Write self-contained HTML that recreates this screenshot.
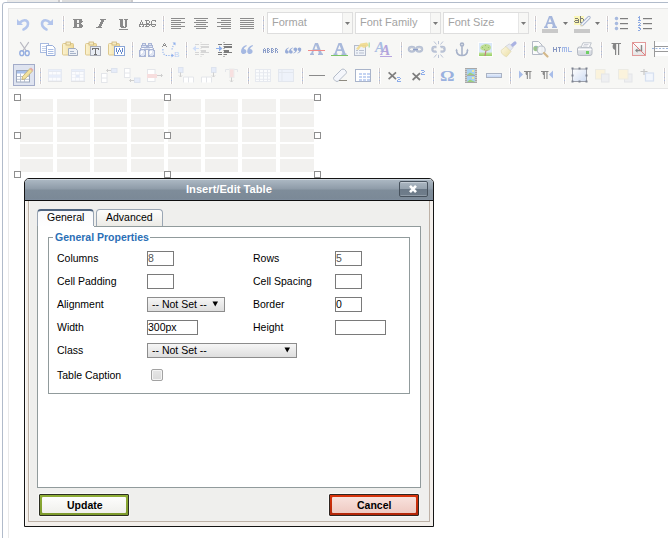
<!DOCTYPE html>
<html><head><meta charset="utf-8"><style>
*{margin:0;padding:0}
body{width:668px;height:538px;overflow:hidden;background:#fff;position:relative;font-family:'Liberation Sans', sans-serif}
.a{position:absolute}
.lbl{position:absolute;font:10.5px 'Liberation Sans', sans-serif;color:#000;white-space:nowrap}
.inp{position:absolute;box-sizing:border-box;border:1px solid #7a7a7a;background:#fff;height:15px;font:10.5px 'Liberation Sans', sans-serif;color:#555;padding-left:0;line-height:13px}
.sel{position:absolute;box-sizing:border-box;border:1px solid #8c8c8c;height:15px;background:linear-gradient(#f6f6f6,#dedede);font:10.5px 'Liberation Sans', sans-serif;color:#000;line-height:13px;padding-left:4px;white-space:nowrap}
</style></head><body>
<!-- top band -->
<div class="a" style="left:7px;top:0;width:51px;height:2px;background:#ebebeb"></div>
<div class="a" style="left:58px;top:0;width:2px;height:2px;background:#cdcbcb"></div>
<div class="a" style="left:60px;top:0;width:2px;height:2px;background:#fbfbfb"></div>
<div class="a" style="left:62px;top:0;width:69px;height:2px;background:#dcdcdc"></div>
<div class="a" style="left:131px;top:0;width:2px;height:2px;background:#cdcbcb"></div>
<!-- editor border -->
<div class="a" style="left:2px;top:2px;width:700px;height:600px;box-sizing:border-box;border:1px solid #b1bbca;border-radius:3px"></div>
<div class="a" style="left:8px;top:88px;width:1px;height:460px;background:#e9e9e9"></div>
<!-- toolbar -->
<div class="a" style="left:8px;top:8px;width:700px;height:81px;box-sizing:border-box;border:1px solid #e6e6e6;background:#f7f7f5"></div>
<div style="position:absolute;left:267px;top:12px;width:86px;height:22px;box-sizing:border-box;border:1px solid #dedede;background:#fff"><div style="position:absolute;left:4px;top:3px;font:11px 'Liberation Sans', sans-serif;color:#a3a3a3;white-space:nowrap">Format</div><div style="position:absolute;right:0;top:0;width:9px;height:20px;background:#f7f7f5;border-left:1px solid #e6e6e6"></div><svg style="position:absolute;left:77px;top:9px" width="6" height="4"><path d="M0 0 H5 L2.5 3 Z" fill="#7a7a7a"/></svg></div><div style="position:absolute;left:355px;top:12px;width:86px;height:22px;box-sizing:border-box;border:1px solid #dedede;background:#fff"><div style="position:absolute;left:4px;top:3px;font:11px 'Liberation Sans', sans-serif;color:#a3a3a3;white-space:nowrap">Font Family</div><div style="position:absolute;right:0;top:0;width:9px;height:20px;background:#f7f7f5;border-left:1px solid #e6e6e6"></div><svg style="position:absolute;left:77px;top:9px" width="6" height="4"><path d="M0 0 H5 L2.5 3 Z" fill="#7a7a7a"/></svg></div><div style="position:absolute;left:443px;top:12px;width:86px;height:22px;box-sizing:border-box;border:1px solid #dedede;background:#fff"><div style="position:absolute;left:4px;top:3px;font:11px 'Liberation Sans', sans-serif;color:#a3a3a3;white-space:nowrap">Font Size</div><div style="position:absolute;right:0;top:0;width:9px;height:20px;background:#f7f7f5;border-left:1px solid #e6e6e6"></div><svg style="position:absolute;left:77px;top:9px" width="6" height="4"><path d="M0 0 H5 L2.5 3 Z" fill="#7a7a7a"/></svg></div>
<!-- table button active -->
<div class="a" style="left:13px;top:64px;width:22px;height:22px;box-sizing:border-box;border:1px solid #a3acc9;background:#dfe4f0"></div>
<svg class="a" style="left:0;top:0" width="668" height="90" viewBox="0 0 668 90"><defs><linearGradient id="gwhite" x1="0" y1="0" x2="0" y2="1"><stop offset="0" stop-color="#fff"/><stop offset="1" stop-color="#e4e4e4"/></linearGradient><linearGradient id="gprint" x1="0" y1="0" x2="0" y2="1"><stop offset="0" stop-color="#e8eaee"/><stop offset="1" stop-color="#d2d6dd"/></linearGradient><linearGradient id="gclip" x1="0" y1="0" x2="1" y2="0"><stop offset="0" stop-color="#fbf3d2"/><stop offset="1" stop-color="#efd994"/></linearGradient><linearGradient id="ggrass" x1="0" y1="0" x2="0" y2="1"><stop offset="0" stop-color="#c6e6a0"/><stop offset="1" stop-color="#96cf62"/></linearGradient><linearGradient id="gbrist" x1="0" y1="0" x2="1" y2="1"><stop offset="0" stop-color="#fcf8e6"/><stop offset="1" stop-color="#ecdfa4"/></linearGradient><linearGradient id="gblue" x1="0" y1="0" x2="0" y2="1"><stop offset="0" stop-color="#eef3fc"/><stop offset="1" stop-color="#bcd0f2"/></linearGradient><linearGradient id="gwhite2" x1="0" y1="0" x2="1" y2="1"><stop offset="0" stop-color="#fff"/><stop offset="1" stop-color="#cfdcf2"/></linearGradient></defs>
<rect x="62" y="16" width="3" height="16" fill="#fff"/>
<rect x="63" y="16" width="1" height="16" fill="#d0caca"/>
<rect x="63" y="20" width="1" height="1" fill="#a9b9da"/>
<rect x="63" y="25" width="1" height="1" fill="#a9b9da"/>
<rect x="63" y="28" width="1" height="1" fill="#a9b9da"/>
<rect x="162" y="16" width="3" height="16" fill="#fff"/>
<rect x="163" y="16" width="1" height="16" fill="#d0caca"/>
<rect x="163" y="20" width="1" height="1" fill="#a9b9da"/>
<rect x="163" y="25" width="1" height="1" fill="#a9b9da"/>
<rect x="163" y="28" width="1" height="1" fill="#a9b9da"/>
<rect x="262" y="16" width="3" height="16" fill="#fff"/>
<rect x="263" y="16" width="1" height="16" fill="#d0caca"/>
<rect x="263" y="20" width="1" height="1" fill="#a9b9da"/>
<rect x="263" y="25" width="1" height="1" fill="#a9b9da"/>
<rect x="263" y="28" width="1" height="1" fill="#a9b9da"/>
<rect x="534" y="16" width="3" height="16" fill="#fff"/>
<rect x="535" y="16" width="1" height="16" fill="#d0caca"/>
<rect x="535" y="20" width="1" height="1" fill="#a9b9da"/>
<rect x="535" y="25" width="1" height="1" fill="#a9b9da"/>
<rect x="535" y="28" width="1" height="1" fill="#a9b9da"/>
<rect x="606" y="16" width="3" height="16" fill="#fff"/>
<rect x="607" y="16" width="1" height="16" fill="#d0caca"/>
<rect x="607" y="20" width="1" height="1" fill="#a9b9da"/>
<rect x="607" y="25" width="1" height="1" fill="#a9b9da"/>
<rect x="607" y="28" width="1" height="1" fill="#a9b9da"/>
<rect x="131" y="42" width="3" height="16" fill="#fff"/>
<rect x="132" y="42" width="1" height="16" fill="#d0caca"/>
<rect x="132" y="46" width="1" height="1" fill="#a9b9da"/>
<rect x="132" y="51" width="1" height="1" fill="#a9b9da"/>
<rect x="132" y="54" width="1" height="1" fill="#a9b9da"/>
<rect x="185" y="42" width="3" height="16" fill="#fff"/>
<rect x="186" y="42" width="1" height="16" fill="#d0caca"/>
<rect x="186" y="46" width="1" height="1" fill="#a9b9da"/>
<rect x="186" y="51" width="1" height="1" fill="#a9b9da"/>
<rect x="186" y="54" width="1" height="1" fill="#a9b9da"/>
<rect x="400" y="42" width="3" height="16" fill="#fff"/>
<rect x="401" y="42" width="1" height="16" fill="#d0caca"/>
<rect x="401" y="46" width="1" height="1" fill="#a9b9da"/>
<rect x="401" y="51" width="1" height="1" fill="#a9b9da"/>
<rect x="401" y="54" width="1" height="1" fill="#a9b9da"/>
<rect x="523" y="42" width="3" height="16" fill="#fff"/>
<rect x="524" y="42" width="1" height="16" fill="#d0caca"/>
<rect x="524" y="46" width="1" height="1" fill="#a9b9da"/>
<rect x="524" y="51" width="1" height="1" fill="#a9b9da"/>
<rect x="524" y="54" width="1" height="1" fill="#a9b9da"/>
<rect x="600" y="42" width="3" height="16" fill="#fff"/>
<rect x="601" y="42" width="1" height="16" fill="#d0caca"/>
<rect x="601" y="46" width="1" height="1" fill="#a9b9da"/>
<rect x="601" y="51" width="1" height="1" fill="#a9b9da"/>
<rect x="601" y="54" width="1" height="1" fill="#a9b9da"/>
<rect x="39" y="68" width="3" height="16" fill="#fff"/>
<rect x="40" y="68" width="1" height="16" fill="#d0caca"/>
<rect x="40" y="72" width="1" height="1" fill="#a9b9da"/>
<rect x="40" y="77" width="1" height="1" fill="#a9b9da"/>
<rect x="40" y="80" width="1" height="1" fill="#a9b9da"/>
<rect x="93" y="68" width="3" height="16" fill="#fff"/>
<rect x="94" y="68" width="1" height="16" fill="#d0caca"/>
<rect x="94" y="72" width="1" height="1" fill="#a9b9da"/>
<rect x="94" y="77" width="1" height="1" fill="#a9b9da"/>
<rect x="94" y="80" width="1" height="1" fill="#a9b9da"/>
<rect x="170" y="68" width="3" height="16" fill="#fff"/>
<rect x="171" y="68" width="1" height="16" fill="#d0caca"/>
<rect x="171" y="72" width="1" height="1" fill="#a9b9da"/>
<rect x="171" y="77" width="1" height="1" fill="#a9b9da"/>
<rect x="171" y="80" width="1" height="1" fill="#a9b9da"/>
<rect x="247" y="68" width="3" height="16" fill="#fff"/>
<rect x="248" y="68" width="1" height="16" fill="#d0caca"/>
<rect x="248" y="72" width="1" height="1" fill="#a9b9da"/>
<rect x="248" y="77" width="1" height="1" fill="#a9b9da"/>
<rect x="248" y="80" width="1" height="1" fill="#a9b9da"/>
<rect x="301" y="68" width="3" height="16" fill="#fff"/>
<rect x="302" y="68" width="1" height="16" fill="#d0caca"/>
<rect x="302" y="72" width="1" height="1" fill="#a9b9da"/>
<rect x="302" y="77" width="1" height="1" fill="#a9b9da"/>
<rect x="302" y="80" width="1" height="1" fill="#a9b9da"/>
<rect x="378" y="68" width="3" height="16" fill="#fff"/>
<rect x="379" y="68" width="1" height="16" fill="#d0caca"/>
<rect x="379" y="72" width="1" height="1" fill="#a9b9da"/>
<rect x="379" y="77" width="1" height="1" fill="#a9b9da"/>
<rect x="379" y="80" width="1" height="1" fill="#a9b9da"/>
<rect x="432" y="68" width="3" height="16" fill="#fff"/>
<rect x="433" y="68" width="1" height="16" fill="#d0caca"/>
<rect x="433" y="72" width="1" height="1" fill="#a9b9da"/>
<rect x="433" y="77" width="1" height="1" fill="#a9b9da"/>
<rect x="433" y="80" width="1" height="1" fill="#a9b9da"/>
<rect x="509" y="68" width="3" height="16" fill="#fff"/>
<rect x="510" y="68" width="1" height="16" fill="#d0caca"/>
<rect x="510" y="72" width="1" height="1" fill="#a9b9da"/>
<rect x="510" y="77" width="1" height="1" fill="#a9b9da"/>
<rect x="510" y="80" width="1" height="1" fill="#a9b9da"/>
<rect x="563" y="68" width="3" height="16" fill="#fff"/>
<rect x="564" y="68" width="1" height="16" fill="#d0caca"/>
<rect x="564" y="72" width="1" height="1" fill="#a9b9da"/>
<rect x="564" y="77" width="1" height="1" fill="#a9b9da"/>
<rect x="564" y="80" width="1" height="1" fill="#a9b9da"/>
<rect x="663" y="68" width="3" height="16" fill="#fff"/>
<rect x="664" y="68" width="1" height="16" fill="#d0caca"/>
<rect x="664" y="72" width="1" height="1" fill="#a9b9da"/>
<rect x="664" y="77" width="1" height="1" fill="#a9b9da"/>
<rect x="664" y="80" width="1" height="1" fill="#a9b9da"/>
<g fill="none" stroke="#b3c5ec" stroke-width="2.6" stroke-linecap="round"><path d="M20 22.5 Q23 19.5 26 20.5 Q29 22 27.5 26 Q26 28.5 23.5 29.5"/><path d="M50 22.5 Q47 19.5 44 20.5 Q41 22 42.5 26 Q44 28.5 46.5 29.5"/></g>
<path d="M17 19 L17 25 L23 25 Z" fill="#b3c5ec"/><path d="M53 19 L53 25 L47 25 Z" fill="#b3c5ec"/>
<g fill="#8a8a8a"><rect x="73" y="19" width="9" height="1"/><rect x="74" y="20" width="3" height="1"/><rect x="79" y="20" width="3" height="1"/><rect x="74" y="21" width="3" height="1"/><rect x="79" y="21" width="4" height="1"/><rect x="74" y="22" width="3" height="1"/><rect x="79" y="22" width="3" height="1"/><rect x="74" y="23" width="7" height="1"/><rect x="74" y="24" width="3" height="1"/><rect x="79" y="24" width="3" height="1"/><rect x="74" y="25" width="3" height="1"/><rect x="79" y="25" width="4" height="1"/><rect x="74" y="26" width="3" height="1"/><rect x="79" y="26" width="4" height="1"/><rect x="73" y="27" width="9" height="1"/></g>
<g fill="#8a8a8a"><rect x="100" y="19" width="6" height="1"/><rect x="101" y="20" width="3" height="1"/><rect x="101" y="21" width="3" height="1"/><rect x="100" y="22" width="3" height="1"/><rect x="100" y="23" width="3" height="1"/><rect x="99" y="24" width="3" height="1"/><rect x="99" y="25" width="3" height="1"/><rect x="98" y="26" width="3" height="1"/><rect x="96" y="27" width="6" height="1"/></g>
<g fill="#8a8a8a"><rect x="119" y="19" width="4" height="1"/><rect x="124" y="19" width="4" height="1"/><rect x="120" y="20" width="3" height="1"/><rect x="125" y="20" width="2" height="1"/><rect x="120" y="21" width="3" height="1"/><rect x="125" y="21" width="2" height="1"/><rect x="120" y="22" width="3" height="1"/><rect x="125" y="22" width="2" height="1"/><rect x="120" y="23" width="3" height="1"/><rect x="125" y="23" width="2" height="1"/><rect x="120" y="24" width="3" height="1"/><rect x="125" y="24" width="2" height="1"/><rect x="120" y="25" width="3" height="1"/><rect x="125" y="25" width="2" height="1"/><rect x="120" y="26" width="4" height="1"/><rect x="125" y="26" width="2" height="1"/><rect x="121" y="27" width="5" height="1"/><rect x="119" y="29" width="9" height="1"/></g>
<g fill="#8c8c8c" opacity="1"><rect x="141" y="20" width="1" height="1"/><rect x="145" y="20" width="4" height="1"/><rect x="152" y="20" width="4" height="1"/><rect x="141" y="21" width="1" height="1"/><rect x="146" y="21" width="1" height="1"/><rect x="149" y="21" width="1" height="1"/><rect x="151" y="21" width="1" height="1"/><rect x="155" y="21" width="1" height="1"/><rect x="140" y="22" width="1" height="1"/><rect x="142" y="22" width="1" height="1"/><rect x="146" y="22" width="1" height="1"/><rect x="149" y="22" width="1" height="1"/><rect x="151" y="22" width="1" height="1"/><rect x="140" y="23" width="1" height="1"/><rect x="142" y="23" width="1" height="1"/><rect x="146" y="23" width="3" height="1"/><rect x="151" y="23" width="1" height="1"/><rect x="139" y="24" width="17" height="1"/><rect x="139" y="25" width="1" height="1"/><rect x="143" y="25" width="1" height="1"/><rect x="146" y="25" width="1" height="1"/><rect x="149" y="25" width="1" height="1"/><rect x="151" y="25" width="1" height="1"/><rect x="155" y="25" width="1" height="1"/><rect x="139" y="26" width="2" height="1"/><rect x="142" y="26" width="2" height="1"/><rect x="145" y="26" width="4" height="1"/><rect x="152" y="26" width="3" height="1"/></g>
<rect x="171" y="18" width="14" height="1" fill="#8c8c8c"/>
<rect x="171" y="20" width="10" height="1" fill="#8c8c8c"/>
<rect x="171" y="22" width="14" height="1" fill="#8c8c8c"/>
<rect x="171" y="24" width="10" height="1" fill="#8c8c8c"/>
<rect x="171" y="26" width="14" height="1" fill="#8c8c8c"/>
<rect x="171" y="28" width="10" height="1" fill="#8c8c8c"/>
<rect x="194" y="18" width="14" height="1" fill="#8c8c8c"/>
<rect x="196" y="20" width="10" height="1" fill="#8c8c8c"/>
<rect x="194" y="22" width="14" height="1" fill="#8c8c8c"/>
<rect x="196" y="24" width="10" height="1" fill="#8c8c8c"/>
<rect x="194" y="26" width="14" height="1" fill="#8c8c8c"/>
<rect x="196" y="28" width="10" height="1" fill="#8c8c8c"/>
<rect x="217" y="18" width="14" height="1" fill="#8c8c8c"/>
<rect x="221" y="20" width="10" height="1" fill="#8c8c8c"/>
<rect x="217" y="22" width="14" height="1" fill="#8c8c8c"/>
<rect x="221" y="24" width="10" height="1" fill="#8c8c8c"/>
<rect x="217" y="26" width="14" height="1" fill="#8c8c8c"/>
<rect x="221" y="28" width="10" height="1" fill="#8c8c8c"/>
<rect x="240" y="18" width="14" height="1" fill="#8c8c8c"/>
<rect x="240" y="20" width="14" height="1" fill="#8c8c8c"/>
<rect x="240" y="22" width="14" height="1" fill="#8c8c8c"/>
<rect x="240" y="24" width="14" height="1" fill="#8c8c8c"/>
<rect x="240" y="26" width="14" height="1" fill="#8c8c8c"/>
<rect x="240" y="28" width="14" height="1" fill="#8c8c8c"/>
<path transform="translate(544 16) scale(1.0)" d="M5 0 L8 0 L12 10.5 L13 10.5 L13 12 L8 12 L8 10.5 L9 10.5 L8.2 8 L3.8 8 L3 10.5 L4 10.5 L4 12 L0 12 L0 10.5 L1 10.5 Z M4.4 6.3 L7.6 6.3 L6 2 Z" fill="#a6b7dc" fill-rule="evenodd"/>
<rect x="542" y="29" width="16" height="4" fill="#c9c9c9"/>
<path d="M563 22 L568 22 L565.5 25 Z" fill="#777"/>
<rect x="574" y="16" width="10" height="9" fill="#fbf7b8"/>
<g fill="#7d7d74" opacity="1"><rect x="580" y="16" width="1" height="1"/><rect x="580" y="17" width="1" height="1"/><rect x="575" y="18" width="3" height="1"/><rect x="580" y="18" width="3" height="1"/><rect x="578" y="19" width="1" height="1"/><rect x="580" y="19" width="1" height="1"/><rect x="583" y="19" width="1" height="1"/><rect x="575" y="20" width="4" height="1"/><rect x="580" y="20" width="1" height="1"/><rect x="583" y="20" width="1" height="1"/><rect x="574" y="21" width="1" height="1"/><rect x="578" y="21" width="1" height="1"/><rect x="580" y="21" width="1" height="1"/><rect x="583" y="21" width="1" height="1"/><rect x="575" y="22" width="4" height="1"/><rect x="580" y="22" width="3" height="1"/></g>
<path d="M582 24.5 L589 17.5" stroke="#a9b6cf" stroke-width="3.4" stroke-linecap="round"/>
<path d="M582 24.5 L589 17.5" stroke="#f4f6fb" stroke-width="1.5" stroke-linecap="round"/>
<path d="M580 26.5 L582 24.5 L583 25.8 z" fill="#e8d9a8"/>
<rect x="574" y="29" width="16" height="4" fill="#c9c9c9"/>
<path d="M595 22 L600 22 L597.5 25 Z" fill="#777"/>
<circle cx="616.5" cy="18.5" r="1.4" fill="#a9bbe0" stroke="#8fa6d6" stroke-width="0.5"/>
<rect x="620" y="18" width="8" height="1.2" fill="#7f7f7f"/>
<rect x="643" y="18" width="9" height="1.2" fill="#7f7f7f"/>
<circle cx="616.5" cy="23.5" r="1.4" fill="#a9bbe0" stroke="#8fa6d6" stroke-width="0.5"/>
<rect x="620" y="23" width="8" height="1.2" fill="#7f7f7f"/>
<rect x="643" y="23" width="9" height="1.2" fill="#7f7f7f"/>
<circle cx="616.5" cy="28.5" r="1.4" fill="#a9bbe0" stroke="#8fa6d6" stroke-width="0.5"/>
<rect x="620" y="28" width="8" height="1.2" fill="#7f7f7f"/>
<rect x="643" y="28" width="9" height="1.2" fill="#7f7f7f"/>
<g fill="#8eaae2" opacity="1"><rect x="639" y="16" width="1" height="1"/><rect x="638" y="17" width="2" height="1"/><rect x="639" y="18" width="1" height="1"/><rect x="639" y="19" width="1" height="1"/><rect x="638" y="20" width="3" height="1"/></g>
<g fill="#8eaae2" opacity="1"><rect x="638" y="22" width="2" height="1"/><rect x="640" y="23" width="1" height="1"/><rect x="639" y="24" width="1" height="1"/><rect x="638" y="25" width="3" height="1"/></g>
<g fill="#8eaae2" opacity="1"><rect x="638" y="27" width="2" height="1"/><rect x="639" y="28" width="2" height="1"/><rect x="640" y="29" width="1" height="1"/><rect x="638" y="30" width="2" height="1"/></g>
<g stroke="#b9b9c2" stroke-width="1.3" stroke-linecap="round"><path d="M20.5 42.5 L26 50.5"/><path d="M28.5 42.5 L23 50.5"/></g>
<g fill="none" stroke="#95aee0" stroke-width="1.4"><ellipse cx="21.8" cy="53.2" rx="2" ry="2.4"/><ellipse cx="27.2" cy="53.2" rx="2" ry="2.4"/></g>
<rect x="40.5" y="43.5" width="8" height="9" fill="#fff" stroke="#a9bbe0"/>
<rect x="42" y="46" width="4" height="1" fill="#c3d0ea"/><rect x="42" y="48" width="4" height="1" fill="#c3d0ea"/><rect x="42" y="50" width="4" height="1" fill="#c3d0ea"/>
<path d="M46.5 45.5 h6 l2.5 2.5 v7.5 h-8.5 z" fill="#fff" stroke="#97acd8"/>
<rect x="48" y="49" width="5.5" height="1" fill="#a9bde4"/><rect x="48" y="51" width="5.5" height="1" fill="#a9bde4"/><rect x="48" y="53" width="5.5" height="1" fill="#a9bde4"/>
<rect x="62.5" y="43.5" width="11" height="11.5" rx="1" fill="url(#gclip)" stroke="#ddc88e"/>
<rect x="66" y="42" width="4.5" height="3" fill="#f6ecc4" stroke="#cdb67a" stroke-width="0.8"/>
<path d="M68.5 48.5 h7 l2 2 v5 h-9 z" fill="#eef1f6" stroke="#a2acbe"/>
<path d="M70 51.5 h4 M70 53.5 h6" stroke="#a6b3c9"/>
<rect x="85.5" y="43.5" width="11" height="11.5" rx="1" fill="url(#gclip)" stroke="#ddc88e"/>
<rect x="89" y="42" width="4.5" height="3" fill="#f6ecc4" stroke="#cdb67a" stroke-width="0.8"/>
<rect x="90.5" y="46.5" width="10" height="9" fill="#e9edf4" stroke="#a9adb8"/>
<g fill="#727272" opacity="1"><rect x="92" y="48" width="7" height="1"/><rect x="92" y="49" width="1" height="1"/><rect x="95" y="49" width="1" height="1"/><rect x="98" y="49" width="1" height="1"/><rect x="95" y="50" width="1" height="1"/><rect x="95" y="51" width="1" height="1"/><rect x="95" y="52" width="1" height="1"/><rect x="95" y="53" width="1" height="1"/><rect x="94" y="54" width="3" height="1"/></g>
<rect x="108.5" y="43.5" width="11" height="11.5" rx="1" fill="url(#gclip)" stroke="#ddc88e"/>
<rect x="112" y="42" width="4.5" height="3" fill="#f6ecc4" stroke="#cdb67a" stroke-width="0.8"/>
<rect x="114.5" y="46.5" width="10" height="9" fill="#fff" stroke="#8ba6d6"/>
<g fill="#5f86cc" opacity="1"><rect x="116" y="48" width="1" height="1"/><rect x="119" y="48" width="1" height="1"/><rect x="122" y="48" width="1" height="1"/><rect x="116" y="49" width="1" height="1"/><rect x="119" y="49" width="1" height="1"/><rect x="122" y="49" width="1" height="1"/><rect x="116" y="50" width="1" height="1"/><rect x="118" y="50" width="1" height="1"/><rect x="120" y="50" width="1" height="1"/><rect x="122" y="50" width="1" height="1"/><rect x="116" y="51" width="1" height="1"/><rect x="118" y="51" width="1" height="1"/><rect x="120" y="51" width="1" height="1"/><rect x="122" y="51" width="1" height="1"/><rect x="117" y="52" width="1" height="1"/><rect x="121" y="52" width="1" height="1"/><rect x="117" y="53" width="1" height="1"/><rect x="121" y="53" width="1" height="1"/></g>
<rect x="139" y="43" width="16" height="14" fill="none"/>
<g fill="#a9b5d5" opacity="1"><rect x="142" y="43" width="4" height="1"/><rect x="148" y="43" width="4" height="1"/><rect x="142" y="44" width="1" height="1"/><rect x="145" y="44" width="1" height="1"/><rect x="148" y="44" width="1" height="1"/><rect x="151" y="44" width="1" height="1"/><rect x="141" y="45" width="12" height="1"/><rect x="141" y="46" width="1" height="1"/><rect x="146" y="46" width="3" height="1"/><rect x="152" y="46" width="1" height="1"/><rect x="141" y="47" width="12" height="1"/><rect x="140" y="48" width="2" height="1"/><rect x="152" y="48" width="2" height="1"/><rect x="140" y="49" width="14" height="1"/><rect x="139" y="50" width="2" height="1"/><rect x="144" y="50" width="2" height="1"/><rect x="148" y="50" width="2" height="1"/><rect x="153" y="50" width="2" height="1"/><rect x="139" y="51" width="1" height="1"/><rect x="145" y="51" width="1" height="1"/><rect x="148" y="51" width="1" height="1"/><rect x="154" y="51" width="1" height="1"/><rect x="139" y="52" width="1" height="1"/><rect x="145" y="52" width="1" height="1"/><rect x="148" y="52" width="1" height="1"/><rect x="154" y="52" width="1" height="1"/><rect x="139" y="53" width="1" height="1"/><rect x="145" y="53" width="1" height="1"/><rect x="148" y="53" width="1" height="1"/><rect x="154" y="53" width="1" height="1"/><rect x="139" y="54" width="1" height="1"/><rect x="145" y="54" width="1" height="1"/><rect x="148" y="54" width="1" height="1"/><rect x="154" y="54" width="1" height="1"/><rect x="139" y="55" width="2" height="1"/><rect x="144" y="55" width="2" height="1"/><rect x="148" y="55" width="2" height="1"/><rect x="153" y="55" width="2" height="1"/><rect x="139" y="56" width="7" height="1"/><rect x="148" y="56" width="7" height="1"/></g>
<g fill="#dfe5f3" opacity="1"><rect x="143" y="44" width="2" height="1"/><rect x="149" y="44" width="2" height="1"/><rect x="142" y="46" width="4" height="1"/><rect x="149" y="46" width="3" height="1"/><rect x="141" y="48" width="12" height="1"/><rect x="141" y="50" width="3" height="1"/><rect x="150" y="50" width="3" height="1"/><rect x="140" y="51" width="5" height="1"/><rect x="149" y="51" width="5" height="1"/><rect x="140" y="52" width="5" height="1"/><rect x="149" y="52" width="5" height="1"/><rect x="140" y="53" width="5" height="1"/><rect x="149" y="53" width="5" height="1"/><rect x="140" y="54" width="5" height="1"/><rect x="149" y="54" width="5" height="1"/><rect x="141" y="55" width="3" height="1"/><rect x="150" y="55" width="3" height="1"/></g>
<g fill="#ffffff" opacity="1"><rect x="142" y="48" width="2" height="1"/><rect x="150" y="48" width="2" height="1"/><rect x="141" y="51" width="2" height="1"/><rect x="150" y="51" width="2" height="1"/><rect x="141" y="52" width="2" height="1"/><rect x="150" y="52" width="2" height="1"/><rect x="141" y="53" width="1" height="1"/><rect x="150" y="53" width="1" height="1"/></g>
<g fill="#8e8e8e" opacity="1"><rect x="164" y="43" width="1" height="1"/><rect x="163" y="44" width="1" height="1"/><rect x="165" y="44" width="1" height="1"/><rect x="163" y="45" width="3" height="1"/><rect x="162" y="46" width="1" height="1"/><rect x="166" y="46" width="1" height="1"/></g>
<path d="M163 49 Q162 55 167 55.5 L172 55.5" fill="none" stroke="#8fb0ec" stroke-width="1.1" stroke-dasharray="1.2 1.3"/>
<path d="M172 49.5 Q173 45 175 43" fill="none" stroke="#8fb0ec" stroke-width="1.1" stroke-dasharray="1.2 1.3"/>
<path d="M172.5 42.5 l3 0 l0 3 z" fill="#8fb0ec"/><path d="M171.5 53.5 l2.5 2 l-2.5 2 z" fill="#8fb0ec"/>
<text x="174" y="56.5" font-family="Liberation Sans" font-size="8" fill="#bcd0f4">B</text>
<rect x="200.5" y="42" width="1" height="1" fill="#d6d6d6"/>
<rect x="200.5" y="44" width="1" height="1" fill="#d6d6d6"/>
<rect x="200.5" y="46" width="1" height="1" fill="#d6d6d6"/>
<rect x="200.5" y="48" width="1" height="1" fill="#d6d6d6"/>
<rect x="200.5" y="50" width="1" height="1" fill="#d6d6d6"/>
<rect x="200.5" y="52" width="1" height="1" fill="#d6d6d6"/>
<rect x="200.5" y="54" width="1" height="1" fill="#d6d6d6"/>
<rect x="200.5" y="56" width="1" height="1" fill="#d6d6d6"/>
<rect x="195" y="44" width="4" height="1" fill="#d6d6d6"/>
<rect x="195" y="52" width="4" height="1" fill="#d6d6d6"/>
<rect x="195" y="54" width="4" height="1" fill="#d6d6d6"/>
<rect x="201" y="44" width="8" height="1" fill="#d6d6d6"/>
<rect x="201" y="46" width="8" height="2" fill="#d6d6d6"/>
<rect x="201" y="50" width="5" height="2" fill="#d6d6d6"/>
<rect x="201" y="52" width="8" height="1" fill="#d6d6d6"/>
<rect x="201" y="54" width="3" height="1" fill="#d6d6d6"/>
<path d="M199 48 h-3 v-2.5 l-3.5 3 l3.5 3 v-2.5 h3 z" fill="#d0def8"/>
<rect x="223.5" y="42" width="1" height="1" fill="#7c7c7c"/>
<rect x="223.5" y="44" width="1" height="1" fill="#7c7c7c"/>
<rect x="223.5" y="46" width="1" height="1" fill="#7c7c7c"/>
<rect x="223.5" y="48" width="1" height="1" fill="#7c7c7c"/>
<rect x="223.5" y="50" width="1" height="1" fill="#7c7c7c"/>
<rect x="223.5" y="52" width="1" height="1" fill="#7c7c7c"/>
<rect x="223.5" y="54" width="1" height="1" fill="#7c7c7c"/>
<rect x="223.5" y="56" width="1" height="1" fill="#7c7c7c"/>
<rect x="218" y="44" width="4" height="1" fill="#7c7c7c"/>
<rect x="218" y="52" width="4" height="1" fill="#7c7c7c"/>
<rect x="218" y="54" width="4" height="1" fill="#7c7c7c"/>
<rect x="224" y="44" width="8" height="1" fill="#7c7c7c"/>
<rect x="224" y="46" width="8" height="2" fill="#7c7c7c"/>
<rect x="224" y="50" width="5" height="2" fill="#7c7c7c"/>
<rect x="224" y="52" width="8" height="1" fill="#7c7c7c"/>
<rect x="224" y="54" width="3" height="1" fill="#7c7c7c"/>
<path d="M216 48 h3 v-2.5 l3.5 3 l-3.5 3 v-2.5 h-3 z" fill="#8fb0ec"/>
<path transform="translate(241 45) scale(1.0)" d="M2.6 9 C1.1 9 0 7.9 0 6.4 C0 3.6 1.8 1.2 5.4 0 L5.8 0.9 C3.9 1.9 3 3 2.9 4 C4.4 4.1 5.4 5.2 5.4 6.5 C5.4 7.9 4.2 9 2.6 9 Z" fill="#a6b9e2"/>
<path transform="translate(247.2 45) scale(1.0)" d="M2.6 9 C1.1 9 0 7.9 0 6.4 C0 3.6 1.8 1.2 5.4 0 L5.8 0.9 C3.9 1.9 3 3 2.9 4 C4.4 4.1 5.4 5.2 5.4 6.5 C5.4 7.9 4.2 9 2.6 9 Z" fill="#a6b9e2"/>
<g fill="#8d9fca" opacity="1"><rect x="264" y="48" width="1" height="1"/><rect x="267" y="48" width="2" height="1"/><rect x="271" y="48" width="2" height="1"/><rect x="275" y="48" width="2" height="1"/><rect x="263" y="49" width="1" height="1"/><rect x="265" y="49" width="1" height="1"/><rect x="267" y="49" width="1" height="1"/><rect x="269" y="49" width="1" height="1"/><rect x="271" y="49" width="1" height="1"/><rect x="273" y="49" width="1" height="1"/><rect x="275" y="49" width="1" height="1"/><rect x="277" y="49" width="1" height="1"/><rect x="263" y="50" width="3" height="1"/><rect x="267" y="50" width="2" height="1"/><rect x="271" y="50" width="2" height="1"/><rect x="275" y="50" width="2" height="1"/><rect x="263" y="51" width="1" height="1"/><rect x="265" y="51" width="1" height="1"/><rect x="267" y="51" width="1" height="1"/><rect x="269" y="51" width="1" height="1"/><rect x="271" y="51" width="1" height="1"/><rect x="273" y="51" width="1" height="1"/><rect x="275" y="51" width="1" height="1"/><rect x="277" y="51" width="1" height="1"/><rect x="263" y="52" width="1" height="1"/><rect x="265" y="52" width="1" height="1"/><rect x="267" y="52" width="2" height="1"/><rect x="271" y="52" width="2" height="1"/><rect x="275" y="52" width="1" height="1"/><rect x="277" y="52" width="1" height="1"/></g>
<path transform="translate(285 47.5) scale(0.68)" d="M2.6 9 C1.1 9 0 7.9 0 6.4 C0 3.6 1.8 1.2 5.4 0 L5.8 0.9 C3.9 1.9 3 3 2.9 4 C4.4 4.1 5.4 5.2 5.4 6.5 C5.4 7.9 4.2 9 2.6 9 Z" fill="#98acd8"/>
<path transform="translate(289 47.5) scale(0.68)" d="M2.6 9 C1.1 9 0 7.9 0 6.4 C0 3.6 1.8 1.2 5.4 0 L5.8 0.9 C3.9 1.9 3 3 2.9 4 C4.4 4.1 5.4 5.2 5.4 6.5 C5.4 7.9 4.2 9 2.6 9 Z" fill="#98acd8"/>
<path transform="translate(293.5 47.5) scale(0.68)" d="M2.8 0 C4.3 0 5.4 1.1 5.4 2.6 C5.4 5.4 3.6 7.8 0 9 L-0.4 8.1 C1.5 7.1 2.4 6 2.5 5 C1 4.9 0 3.8 0 2.5 C0 1.1 1.2 0 2.8 0 Z" fill="#98acd8"/>
<path transform="translate(297.6 47.5) scale(0.68)" d="M2.8 0 C4.3 0 5.4 1.1 5.4 2.6 C5.4 5.4 3.6 7.8 0 9 L-0.4 8.1 C1.5 7.1 2.4 6 2.5 5 C1 4.9 0 3.8 0 2.5 C0 1.1 1.2 0 2.8 0 Z" fill="#98acd8"/>
<path transform="translate(310 43) scale(1.0)" d="M5 0 L8 0 L12 10.5 L13 10.5 L13 12 L8 12 L8 10.5 L9 10.5 L8.2 8 L3.8 8 L3 10.5 L4 10.5 L4 12 L0 12 L0 10.5 L1 10.5 Z M4.4 6.3 L7.6 6.3 L6 2 Z" fill="#a9b9db" fill-rule="evenodd"/>
<rect x="308" y="50" width="17" height="1" fill="#f08a8a"/>
<path transform="translate(333.5 43) scale(1.0)" d="M5 0 L8 0 L12 10.5 L13 10.5 L13 12 L8 12 L8 10.5 L9 10.5 L8.2 8 L3.8 8 L3 10.5 L4 10.5 L4 12 L0 12 L0 10.5 L1 10.5 Z M4.4 6.3 L7.6 6.3 L6 2 Z" fill="#a9b9db" fill-rule="evenodd"/>
<rect x="331" y="55" width="17" height="1" fill="#7cc466"/>
<rect x="354.5" y="45.5" width="11" height="10" fill="#eef2f8" stroke="#b5bccb"/>
<path d="M356 50.5 h2 M359 50.5 h5 M356 53 h2 M359 53 h5" stroke="#b9c0cf"/>
<path d="M356 49 L360.5 43.5 L367 42.5 L369 45.5 L364 48 L361 46.5 L358.5 50 z" fill="#f0d98c" opacity="0.9"/>
<rect x="368.5" y="42.5" width="1.5" height="5" fill="#b6e2ae"/>
<text x="375" y="52" font-family="Liberation Serif" font-style="italic" font-weight="bold" font-size="14.5" fill="#a9bde3">A</text>
<text x="380.5" y="55" font-family="Liberation Serif" font-style="italic" font-weight="bold" font-size="14.5" fill="#b3a4dc">A</text>
<rect x="380" y="56" width="12" height="1" fill="#b9a6e0"/>
<g fill="none"><ellipse cx="411.8" cy="49.3" rx="3.3" ry="2.7" stroke="#b7c1d5" stroke-width="1.5"/><ellipse cx="419.2" cy="49.3" rx="3.3" ry="2.7" stroke="#b7c1d5" stroke-width="1.5"/><ellipse cx="411.8" cy="49.3" rx="2.3" ry="1.6" stroke="#a0abc2" stroke-width="0.7"/><ellipse cx="419.2" cy="49.3" rx="2.3" ry="1.6" stroke="#a0abc2" stroke-width="0.7"/></g>
<rect x="413" y="49" width="5" height="1.2" fill="#8d9ec9"/>
<g fill="none" stroke="#b7c1d5" stroke-width="1.5"><path d="M436.5 46.6 h-1.8 a2.7 2.7 0 0 0 0 5.4 h2.2"/><path d="M440.5 52 h1.8 a2.7 2.7 0 0 0 0 -5.4 h-2.2"/></g>
<g fill="none" stroke="#a0abc2" stroke-width="0.7"><path d="M436.5 47.7 h-1.8 a1.6 1.6 0 0 0 0 3.2 h1.5"/><path d="M440.5 50.9 h1.8 a1.6 1.6 0 0 0 0 -3.2 h-1.5"/></g>
<g stroke="#b3bdd2" stroke-width="0.9"><path d="M434 41.5 l2.5 3 M438.5 41 v3.2 M443 41.5 l-2.5 3 M434 57.5 l2.5 -3 M438.5 58 v-3.2 M443 57.5 l-2.5 -3"/></g>
<g fill="none" stroke="#a7b2c9" stroke-width="1.6"><circle cx="462" cy="44.6" r="1.5"/><path d="M462 46.5 V55.5"/><path d="M456.5 50 Q456.5 55.5 462 55.5 Q467.5 55.5 467.5 50"/></g>
<path d="M455.5 50.5 l1 -2 l1.2 2 z M466.5 50.5 l1 -2 l1 2 z" fill="#a7b2c9"/>
<rect x="478.5" y="42.5" width="14" height="14" fill="#d9e8f9" stroke="#fdfdfd"/>
<rect x="479" y="52.5" width="13" height="3.5" fill="url(#ggrass)"/>
<path d="M485 56 L485.8 51 L484 49 M485.8 51 L488.5 49.5" fill="none" stroke="#c47a84" stroke-width="1.1"/>
<path d="M480.5 49 Q479.8 45.8 483 45 Q485.5 43.2 488.5 44.6 Q491.8 46 490.6 49 Q489.5 51 486.5 50.4 Q483.5 51.6 480.5 49 Z" fill="#bddc8e" fill-opacity="0.95"/>
<g fill="#95c46a"><rect x="482" y="47" width="1" height="1"/><rect x="485" y="45" width="1" height="1"/><rect x="488" y="47" width="1" height="1"/><rect x="484" y="49" width="1" height="1"/></g>
<path d="M510.5 47 L515 43" stroke="#aab2e2" stroke-width="3.2" stroke-linecap="round"/>
<path d="M505.5 46.5 L509.5 43.8 L513 47.5 L510 51 z" fill="#e6e9f0" stroke="#c2c6d2" stroke-width="0.6"/>
<path d="M501 50.5 L506 46.5 L511 51.5 L506.5 56.8 Q503.5 56 501.6 53 z" fill="url(#gbrist)" stroke="#dcd3a8" stroke-width="0.6"/>
<path d="M532.5 41.5 h6 l3.5 3.5 v9.5 h-9.5 z" fill="#fbfbfb" stroke="#b3b9c4"/>
<circle cx="536" cy="48.5" r="2.7" fill="#9dc48c"/><path d="M534.5 47 a2 2 0 0 1 3 0" fill="#8bb0e0"/>
<circle cx="541.2" cy="50" r="4" fill="#f2f4f7" fill-opacity="0.85" stroke="#b7bdc8" stroke-width="1.1"/>
<path d="M544 53 L547.5 56.5" stroke="#d4b88a" stroke-width="2.2" stroke-linecap="round"/>
<g fill="#8898c2" opacity="1"><rect x="553" y="47" width="1" height="1"/><rect x="556" y="47" width="1" height="1"/><rect x="558" y="47" width="3" height="1"/><rect x="553" y="48" width="1" height="1"/><rect x="556" y="48" width="1" height="1"/><rect x="559" y="48" width="1" height="1"/><rect x="553" y="49" width="4" height="1"/><rect x="559" y="49" width="1" height="1"/><rect x="553" y="50" width="1" height="1"/><rect x="556" y="50" width="1" height="1"/><rect x="559" y="50" width="1" height="1"/><rect x="553" y="51" width="1" height="1"/><rect x="556" y="51" width="1" height="1"/><rect x="559" y="51" width="1" height="1"/></g>
<g fill="#a6bbe8" opacity="1"><rect x="562" y="47" width="5" height="1"/><rect x="568" y="47" width="1" height="1"/><rect x="562" y="48" width="1" height="1"/><rect x="564" y="48" width="1" height="1"/><rect x="566" y="48" width="1" height="1"/><rect x="568" y="48" width="1" height="1"/><rect x="562" y="49" width="1" height="1"/><rect x="564" y="49" width="1" height="1"/><rect x="566" y="49" width="1" height="1"/><rect x="568" y="49" width="1" height="1"/><rect x="562" y="50" width="1" height="1"/><rect x="564" y="50" width="1" height="1"/><rect x="566" y="50" width="1" height="1"/><rect x="568" y="50" width="1" height="1"/><rect x="562" y="51" width="1" height="1"/><rect x="564" y="51" width="1" height="1"/><rect x="566" y="51" width="1" height="1"/><rect x="568" y="51" width="4" height="1"/></g>
<rect x="577.5" y="47" width="14.5" height="8.5" rx="2" fill="url(#gprint)" stroke="#b4b9c2"/>
<path d="M581 47.5 L583 42.8 h8.3 l-2 4.7 z" fill="#fbfbfc" stroke="#b9bec6" stroke-width="0.9"/>
<path d="M584 44.5 h4.5 M583 46 h4.5" stroke="#c4c8d0" stroke-width="0.8"/>
<rect x="578" y="49" width="13.5" height="1.2" fill="#fdfdfd"/>
<rect x="586" y="51" width="3" height="3" fill="#6fd064"/>
<path d="M611.5 43 H621 V44 H611.5 Z M616 43 V49.8 A3.4 3.4 0 0 1 616 43 Z M615 43 h1.2 v12 h-1.2 Z M618 43 h1.2 v12 h-1.2 Z" fill="#858585"/>
<rect x="632.5" y="42.5" width="13" height="13" fill="url(#gwhite)" stroke="#e29a9a"/>
<path d="M641.5 45 v5.5 h-5.5" fill="none" stroke="#888" stroke-width="1.4"/><path d="M635 50.5 l2.5 -2.2 v4.4 z" fill="#888"/>
<path d="M633 43 L645 55" stroke="#e07c7c" stroke-width="1"/>
<rect x="654" y="41" width="1" height="16" fill="#9a9a9a"/>
<rect x="655" y="42" width="13" height="14" fill="#fff"/>
<rect x="655" y="46" width="13" height="1" fill="#9a9a9a"/><rect x="655" y="51" width="13" height="1" fill="#9a9a9a"/>
<path d="M652 48.5 h16" stroke="#9db6de" stroke-dasharray="2 1.5"/>
<rect x="16.5" y="70.5" width="13" height="11.5" fill="#fff" stroke="#9aa6bc"/>
<rect x="17" y="71" width="12" height="2.5" fill="#a8c0ea"/>
<path d="M17 76.5 h12 M17 79.3 h12 M20.5 73.5 v8.5 M24.5 73.5 v8.5" stroke="#b3bccd" stroke-width="0.9"/>
<path d="M22.5 76.5 L30 68.5 L32.5 71 L25 79 L22 79.5 z" fill="#f2e2a0" stroke="#c2ad70" stroke-width="0.8"/>
<path d="M30 68.5 L31 67.5 L33.5 70 L32.5 71 z" fill="#eaa4a4"/>
<rect x="48" y="69" width="14" height="13" fill="#e6eaf2"/>
<rect x="49" y="70" width="12" height="1" fill="#e9effb"/>
<rect x="49" y="72" width="3.5" height="2.5" fill="#fbfcfe"/>
<rect x="53" y="72" width="3.5" height="2.5" fill="#fbfcfe"/>
<rect x="57" y="72" width="3.5" height="2.5" fill="#fbfcfe"/>
<rect x="49" y="75" width="3.5" height="2.5" fill="#fbfcfe"/>
<rect x="53" y="75" width="3.5" height="2.5" fill="#fbfcfe"/>
<rect x="57" y="75" width="3.5" height="2.5" fill="#fbfcfe"/>
<rect x="49" y="78" width="3.5" height="2.5" fill="#fbfcfe"/>
<rect x="53" y="78" width="3.5" height="2.5" fill="#fbfcfe"/>
<rect x="57" y="78" width="3.5" height="2.5" fill="#fbfcfe"/>
<rect x="49" y="75" width="12" height="2.5" fill="#e8eefa"/>
<rect x="48" y="81" width="14" height="1" fill="#e2e3e6"/>
<rect x="71" y="69" width="14" height="13" fill="#e6eaf2"/>
<rect x="72" y="70" width="12" height="1" fill="#e9effb"/>
<rect x="72" y="72" width="3.5" height="2.5" fill="#fbfcfe"/>
<rect x="76" y="72" width="3.5" height="2.5" fill="#fbfcfe"/>
<rect x="80" y="72" width="3.5" height="2.5" fill="#fbfcfe"/>
<rect x="72" y="75" width="3.5" height="2.5" fill="#fbfcfe"/>
<rect x="76" y="75" width="3.5" height="2.5" fill="#fbfcfe"/>
<rect x="80" y="75" width="3.5" height="2.5" fill="#fbfcfe"/>
<rect x="72" y="78" width="3.5" height="2.5" fill="#fbfcfe"/>
<rect x="76" y="78" width="3.5" height="2.5" fill="#fbfcfe"/>
<rect x="80" y="78" width="3.5" height="2.5" fill="#fbfcfe"/>
<rect x="76" y="75" width="3.5" height="2.5" fill="#e3eaf8"/>
<rect x="71" y="81" width="14" height="1" fill="#e2e3e6"/>
<rect x="101.5" y="73.5" width="5.5" height="9" fill="#fff" stroke="#e4e6ea"/><path d="M101.5 78 h5.5" stroke="#e4e6ea"/>
<rect x="111.5" y="68.5" width="5.5" height="4" fill="#e6ecf9" stroke="#dde3ee"/>
<path d="M107 70.5 h4 M108 69 l-1.5 1.5 l1.5 1.5" fill="none" stroke="#cfcfcf"/>
<rect x="124.5" y="68.5" width="5.5" height="9" fill="#fff" stroke="#e4e6ea"/><path d="M124.5 73 h5.5" stroke="#e4e6ea"/>
<rect x="134.5" y="78" width="5.5" height="4.5" fill="#e6ecf9" stroke="#dde3ee"/>
<path d="M130 80.5 h4 M131 79 l-1.5 1.5 l1.5 1.5" fill="none" stroke="#cfcfcf"/>
<rect x="147.5" y="69.5" width="7.5" height="12" fill="#fff" stroke="#e4e6ea"/>
<rect x="147" y="74" width="10" height="4" fill="#f7dede"/>
<path d="M157 75.5 h5 M161 74 l1.5 1.5 l-1.5 1.5" fill="none" stroke="#cfcfcf"/>
<rect x="178.5" y="67.5" width="4.5" height="5" fill="#e6ecf9" stroke="#dde3ee"/>
<path d="M180.5 72.5 v4 M179 75.5 l1.5 1.5 l1.5 -1.5" fill="none" stroke="#cfcfcf"/>
<path d="M183.5 82.5 v-5.5 h10 v5.5 M188.5 77 v5.5" fill="#fff" stroke="#e4e6ea"/>
<path d="M201.5 82.5 v-5.5 h10 v5.5 M206.5 77 v5.5" fill="#fff" stroke="#e4e6ea"/>
<rect x="211.5" y="67.5" width="4.5" height="5" fill="#e6ecf9" stroke="#dde3ee"/>
<path d="M213.5 72.5 v4 M212 75.5 l1.5 1.5 l1.5 -1.5" fill="none" stroke="#cfcfcf"/>
<path d="M225.5 72 v-2.5 M225.5 69.5 h3.5 M234 69.5 h3.5 v2.5" fill="none" stroke="#e4e6ea"/>
<rect x="229.5" y="69" width="4.5" height="8.5" fill="#f7e0e0" stroke="#ececec"/>
<path d="M231.5 77.5 v4 M230 80.5 l1.5 1.5 l1.5 -1.5" fill="none" stroke="#cfcfcf"/>
<rect x="255.5" y="69.5" width="15" height="12" fill="#fbfcfd" stroke="#e6e9ef"/>
<rect x="259.0" y="69" width="1" height="13" fill="#e6e9ef"/>
<rect x="263.0" y="69" width="1" height="13" fill="#e6e9ef"/>
<rect x="267.0" y="69" width="1" height="13" fill="#e6e9ef"/>
<rect x="255" y="72.2" width="16" height="1" fill="#e6e9ef"/>
<rect x="255" y="75.5" width="16" height="1" fill="#e6e9ef"/>
<rect x="255" y="78.8" width="16" height="1" fill="#e6e9ef"/>
<rect x="278.5" y="69.5" width="15" height="12" fill="#eef2fa" stroke="#e3e7ee"/><path d="M278 72.5 h16 M282 69 v13" stroke="#e3e7ee"/>
<rect x="309" y="75" width="16" height="1" fill="#8a8a8a"/>
<path d="M334 77 L341.5 69.5 Q343 68.5 344.5 69.5 L346 71 Q347 72.5 346 73.5 L338.5 81 Q337 82 335.5 81 L334 79.5 Q333 78.5 334 77 z" fill="#f4f6fb" stroke="#adb5c3" stroke-width="0.9"/>
<rect x="339" y="80" width="8" height="1" fill="#8e8a80"/>
<rect x="355.5" y="69.5" width="15" height="12" fill="#fff" stroke="#a9b4ca"/>
<rect x="359" y="73" width="3" height="2" fill="#c5d4f2"/>
<rect x="359" y="76" width="3" height="2" fill="#c5d4f2"/>
<rect x="359" y="79" width="3" height="2" fill="#c5d4f2"/>
<rect x="363" y="73" width="3" height="2" fill="#c5d4f2"/>
<rect x="363" y="76" width="3" height="2" fill="#c5d4f2"/>
<rect x="363" y="79" width="3" height="2" fill="#c5d4f2"/>
<rect x="367" y="73" width="3" height="2" fill="#c5d4f2"/>
<rect x="367" y="76" width="3" height="2" fill="#c5d4f2"/>
<rect x="367" y="79" width="3" height="2" fill="#c5d4f2"/>
<path d="M388.6 72.4 L396 79.2 M396 72.4 L388.6 79.2" stroke="#7e7e7e" stroke-width="1.7"/>
<g fill="#8cacea" opacity="1"><rect x="397" y="77" width="3" height="1"/><rect x="400" y="78" width="1" height="1"/><rect x="398" y="79" width="2" height="1"/><rect x="397" y="80" width="1" height="1"/><rect x="397" y="81" width="4" height="1"/></g>
<path d="M412.6 73.2 L420 80 M420 73.2 L412.6 80" stroke="#7e7e7e" stroke-width="1.7"/>
<g fill="#8cacea" opacity="1"><rect x="421" y="70" width="3" height="1"/><rect x="424" y="71" width="1" height="1"/><rect x="422" y="72" width="2" height="1"/><rect x="421" y="73" width="1" height="1"/><rect x="421" y="74" width="4" height="1"/></g>
<text x="440" y="81" font-family="Liberation Serif" font-weight="bold" font-size="15" fill="#9ab1df" textLength="14.5" lengthAdjust="spacingAndGlyphs">&#937;</text>
<rect x="465" y="68" width="12" height="15" fill="#a8a8a8"/>
<rect x="467" y="69" width="8" height="6" fill="#a6d0f0"/><rect x="467" y="76" width="8" height="6" fill="#a6d0f0"/>
<path d="M467 75 L470 72.5 L475 75 z M467 82 L470 79.5 L475 82 z" fill="#9ccf7e"/>
<rect x="472" y="70" width="2" height="2" fill="#eee7a0"/><rect x="472" y="77" width="2" height="2" fill="#eee7a0"/>
<rect x="465.5" y="69" width="1" height="1" fill="#eee"/><rect x="475.5" y="69" width="1" height="1" fill="#eee"/>
<rect x="465.5" y="71" width="1" height="1" fill="#eee"/><rect x="475.5" y="71" width="1" height="1" fill="#eee"/>
<rect x="465.5" y="73" width="1" height="1" fill="#eee"/><rect x="475.5" y="73" width="1" height="1" fill="#eee"/>
<rect x="465.5" y="75" width="1" height="1" fill="#eee"/><rect x="475.5" y="75" width="1" height="1" fill="#eee"/>
<rect x="465.5" y="77" width="1" height="1" fill="#eee"/><rect x="475.5" y="77" width="1" height="1" fill="#eee"/>
<rect x="465.5" y="79" width="1" height="1" fill="#eee"/><rect x="475.5" y="79" width="1" height="1" fill="#eee"/>
<rect x="465.5" y="81" width="1" height="1" fill="#eee"/><rect x="475.5" y="81" width="1" height="1" fill="#eee"/>
<rect x="486.5" y="73.5" width="15" height="4" fill="url(#gblue)" stroke="#aab3c4"/>
<path d="M519 70.5 L523 74.5 L519 78.5 z" fill="#a8bde9"/>
<path d="M524 71 H531.5 V72 H524 Z M527.2 71 V75.6 A2.4 2.4 0 0 1 527.2 71 Z M526.8 71 h1.1 v8 h-1.1 Z M529.4 71 h1.1 v8 h-1.1 Z" fill="#8a8a8a"/>
<path d="M541 71 H548.5 V72 H541 Z M544.2 71 V75.6 A2.4 2.4 0 0 1 544.2 71 Z M543.8 71 h1.1 v8 h-1.1 Z M546.4 71 h1.1 v8 h-1.1 Z" fill="#8a8a8a"/>
<path d="M553 70.5 L549 74.5 L553 78.5 z" fill="#a8bde9"/>
<rect x="572.5" y="69" width="14" height="12.5" fill="url(#gwhite2)" stroke="#9a9ea8"/>
<rect x="571.5" y="67.5" width="2" height="2" fill="#7d8290"/>
<rect x="571.5" y="74.5" width="2" height="2" fill="#7d8290"/>
<rect x="571.5" y="80.5" width="2" height="2" fill="#7d8290"/>
<rect x="578.5" y="67.5" width="2" height="2" fill="#7d8290"/>
<rect x="578.5" y="80.5" width="2" height="2" fill="#7d8290"/>
<rect x="585.5" y="67.5" width="2" height="2" fill="#7d8290"/>
<rect x="585.5" y="74.5" width="2" height="2" fill="#7d8290"/>
<rect x="585.5" y="80.5" width="2" height="2" fill="#7d8290"/>
<rect x="595.5" y="69.5" width="9.5" height="9.5" fill="#fbf3dc" stroke="#ecebe4"/>
<rect x="601.5" y="74" width="7.5" height="8" fill="#eeeff1" stroke="#e4e5e8"/>
<rect x="601.5" y="74" width="7.5" height="8" fill="#eeeff1" stroke="#e4e5e8" transform="translate(23 0)"/>
<rect x="618.5" y="69.5" width="9.5" height="9.5" fill="#fbf3dc" stroke="#ecebe4"/>
<rect x="645.5" y="73" width="8" height="8" fill="#f2f6fc" stroke="#d6e0f0" stroke-width="1.2"/>
<path d="M640.5 71.5 h7 M644 69 v6" stroke="#c8c8c8" stroke-width="1.2"/>
</svg>

<div class="a" style="left:20px;top:99px;width:33px;height:13px;background:#f2f1ef"></div>
<div class="a" style="left:57px;top:99px;width:33px;height:13px;background:#f2f1ef"></div>
<div class="a" style="left:94px;top:99px;width:33px;height:13px;background:#f2f1ef"></div>
<div class="a" style="left:131px;top:99px;width:33px;height:13px;background:#f2f1ef"></div>
<div class="a" style="left:168px;top:99px;width:33px;height:13px;background:#f2f1ef"></div>
<div class="a" style="left:205px;top:99px;width:33px;height:13px;background:#f2f1ef"></div>
<div class="a" style="left:242px;top:99px;width:34px;height:13px;background:#f2f1ef"></div>
<div class="a" style="left:280px;top:99px;width:34px;height:13px;background:#f2f1ef"></div>
<div class="a" style="left:20px;top:114px;width:33px;height:13px;background:#f2f1ef"></div>
<div class="a" style="left:57px;top:114px;width:33px;height:13px;background:#f2f1ef"></div>
<div class="a" style="left:94px;top:114px;width:33px;height:13px;background:#f2f1ef"></div>
<div class="a" style="left:131px;top:114px;width:33px;height:13px;background:#f2f1ef"></div>
<div class="a" style="left:168px;top:114px;width:33px;height:13px;background:#f2f1ef"></div>
<div class="a" style="left:205px;top:114px;width:33px;height:13px;background:#f2f1ef"></div>
<div class="a" style="left:242px;top:114px;width:34px;height:13px;background:#f2f1ef"></div>
<div class="a" style="left:280px;top:114px;width:34px;height:13px;background:#f2f1ef"></div>
<div class="a" style="left:20px;top:129px;width:33px;height:13px;background:#f2f1ef"></div>
<div class="a" style="left:57px;top:129px;width:33px;height:13px;background:#f2f1ef"></div>
<div class="a" style="left:94px;top:129px;width:33px;height:13px;background:#f2f1ef"></div>
<div class="a" style="left:131px;top:129px;width:33px;height:13px;background:#f2f1ef"></div>
<div class="a" style="left:168px;top:129px;width:33px;height:13px;background:#f2f1ef"></div>
<div class="a" style="left:205px;top:129px;width:33px;height:13px;background:#f2f1ef"></div>
<div class="a" style="left:242px;top:129px;width:34px;height:13px;background:#f2f1ef"></div>
<div class="a" style="left:280px;top:129px;width:34px;height:13px;background:#f2f1ef"></div>
<div class="a" style="left:20px;top:144px;width:33px;height:13px;background:#f2f1ef"></div>
<div class="a" style="left:57px;top:144px;width:33px;height:13px;background:#f2f1ef"></div>
<div class="a" style="left:94px;top:144px;width:33px;height:13px;background:#f2f1ef"></div>
<div class="a" style="left:131px;top:144px;width:33px;height:13px;background:#f2f1ef"></div>
<div class="a" style="left:168px;top:144px;width:33px;height:13px;background:#f2f1ef"></div>
<div class="a" style="left:205px;top:144px;width:33px;height:13px;background:#f2f1ef"></div>
<div class="a" style="left:242px;top:144px;width:34px;height:13px;background:#f2f1ef"></div>
<div class="a" style="left:280px;top:144px;width:34px;height:13px;background:#f2f1ef"></div>
<div class="a" style="left:20px;top:159px;width:33px;height:13px;background:#f2f1ef"></div>
<div class="a" style="left:57px;top:159px;width:33px;height:13px;background:#f2f1ef"></div>
<div class="a" style="left:94px;top:159px;width:33px;height:13px;background:#f2f1ef"></div>
<div class="a" style="left:131px;top:159px;width:33px;height:13px;background:#f2f1ef"></div>
<div class="a" style="left:168px;top:159px;width:33px;height:13px;background:#f2f1ef"></div>
<div class="a" style="left:205px;top:159px;width:33px;height:13px;background:#f2f1ef"></div>
<div class="a" style="left:242px;top:159px;width:34px;height:13px;background:#f2f1ef"></div>
<div class="a" style="left:280px;top:159px;width:34px;height:13px;background:#f2f1ef"></div>
<div class="a" style="left:14px;top:94px;width:7px;height:7px;box-sizing:border-box;border:1px solid #8f8f8f;background:#fff"></div>
<div class="a" style="left:14px;top:132px;width:7px;height:7px;box-sizing:border-box;border:1px solid #8f8f8f;background:#fff"></div>
<div class="a" style="left:14px;top:171px;width:7px;height:7px;box-sizing:border-box;border:1px solid #8f8f8f;background:#fff"></div>
<div class="a" style="left:164px;top:94px;width:7px;height:7px;box-sizing:border-box;border:1px solid #8f8f8f;background:#fff"></div>
<div class="a" style="left:164px;top:132px;width:7px;height:7px;box-sizing:border-box;border:1px solid #8f8f8f;background:#fff"></div>
<div class="a" style="left:164px;top:171px;width:7px;height:7px;box-sizing:border-box;border:1px solid #8f8f8f;background:#fff"></div>
<div class="a" style="left:314px;top:94px;width:7px;height:7px;box-sizing:border-box;border:1px solid #8f8f8f;background:#fff"></div>
<div class="a" style="left:314px;top:132px;width:7px;height:7px;box-sizing:border-box;border:1px solid #8f8f8f;background:#fff"></div>
<div class="a" style="left:314px;top:171px;width:7px;height:7px;box-sizing:border-box;border:1px solid #8f8f8f;background:#fff"></div>

<div class="a" style="left:24px;top:178px;width:410px;height:349px;box-sizing:border-box;border:1px solid #151515;border-radius:5px 5px 0 0;background:#f3efeb;overflow:hidden">
  <div class="a" style="left:0;top:0;width:408px;height:21px;background:linear-gradient(#cdd6de 0,#cdd6de 1px,#abb7c2 1px,#8e9ba8 10px,#7f8d9a 11px,#7b8997 20px,#8190a2 21px);border-bottom:1px solid #0e0e0e"></div>
</div>
<div class="a" style="left:25px;top:201px;width:1px;height:324px;background:#fbf9f7"></div>
<div class="a" style="left:28px;top:201px;width:402px;height:321px;box-sizing:border-box;border:1px solid #bdb1a6;border-top:none;background:#efefed"></div>
<div class="a" style="left:29px;top:201px;width:1px;height:319px;background:#f7f7f6"></div>
<div class="lbl" style="left:186px;top:183px;font-weight:bold;color:#fff;font-size:11.15px">Insert/Edit Table</div>
<div class="a" style="left:399px;top:181px;width:29px;height:16px;box-sizing:border-box;border:1px solid #47525d;border-radius:2px;background:linear-gradient(#c3ccd5 0,#c3ccd5 1px,#a8b4bf 1px,#95a2ae 7px,#6b7987 7px,#6f7d8b 13px,#8e9aa6 13px)"></div>
<svg class="a" style="left:399px;top:181px" width="29" height="16"><path d="M11 4.8 L17 11.2 M17 4.8 L11 11.2" stroke="#fff" stroke-width="2.6"/></svg>

<!-- tabs -->
<div class="a" style="left:37px;top:209px;width:57px;height:18px;box-sizing:border-box;border:1px solid #9aa6b4;border-top:2px solid #4f6580;border-bottom:none;border-radius:4px 4px 0 0;background:linear-gradient(#f8f9fb,#fff)"></div>
<div class="lbl" style="left:47px;top:211px">General</div>
<div class="a" style="left:96px;top:209px;width:67px;height:17px;box-sizing:border-box;border:1px solid #9aa6b4;border-bottom:none;border-radius:4px 4px 0 0;background:linear-gradient(#fdfdfc,#ecebe6)"></div>
<div class="lbl" style="left:106px;top:211px">Advanced</div>
<!-- panel -->
<div class="a" style="left:37px;top:226px;width:384px;height:262px;box-sizing:border-box;border:1px solid #919b9c;border-top:none;background:#fff"></div>
<div class="a" style="left:94px;top:226px;width:327px;height:1px;background:#919b9c"></div>
<!-- fieldset -->
<div class="a" style="left:48px;top:237px;width:362px;height:157px;box-sizing:border-box;border:1px solid #919b9c"></div>
<div class="a" style="left:53px;top:231px;width:97px;height:12px;background:#fff"></div>
<div class="lbl" style="left:55px;top:231px;font-weight:bold;color:#2b6fb6">General Properties</div>

<div class="lbl" style="left:57px;top:252px">Columns</div>
<div class="lbl" style="left:253px;top:252px">Rows</div>
<div class="lbl" style="left:57px;top:275px">Cell Padding</div>
<div class="lbl" style="left:253px;top:275px">Cell Spacing</div>
<div class="lbl" style="left:57px;top:298px">Alignment</div>
<div class="lbl" style="left:253px;top:298px">Border</div>
<div class="lbl" style="left:57px;top:321px">Width</div>
<div class="lbl" style="left:253px;top:321px">Height</div>
<div class="lbl" style="left:57px;top:344px">Class</div>
<div class="lbl" style="left:57px;top:369px">Table Caption</div>
<div class="inp" style="left:147px;top:251px;width:27px">8</div>
<div class="inp" style="left:335px;top:251px;width:27px">5</div>
<div class="inp" style="left:147px;top:274px;width:27px"></div>
<div class="inp" style="left:335px;top:274px;width:27px"></div>
<div class="sel" style="left:147px;top:297px;width:78px">-- Not Set --</div>
<svg class="a" style="left:212px;top:301px" width="7" height="6"><path d="M0.5 0.5 H6 L3.25 5.5 Z" fill="#000"/></svg>
<div class="inp" style="left:335px;top:297px;width:27px;color:#000">0</div>
<div class="inp" style="left:147px;top:320px;width:51px;color:#000">300px</div>
<div class="inp" style="left:335px;top:320px;width:51px"></div>
<div class="sel" style="left:147px;top:343px;width:150px">-- Not Set --</div>
<svg class="a" style="left:284px;top:347px" width="7" height="6"><path d="M0.5 0.5 H6 L3.25 5.5 Z" fill="#000"/></svg>
<div class="a" style="left:151px;top:369px;width:12px;height:12px;box-sizing:border-box;border:1px solid #a2a2a2;border-radius:2px;background:linear-gradient(#e6e6e6,#dadada);box-shadow:inset 0 0 0 1px #f4f4f4"></div>

<div class="a" style="left:38px;top:493px;width:92px;height:24px;border-radius:2px;background:#f8f8f7"></div>
<div class="a" style="left:39px;top:494px;width:90px;height:22px;box-sizing:border-box;border:1px solid #2b2e22;border-radius:1px;background:linear-gradient(#8fae36,#7d9a2c)"></div>
<div class="a" style="left:42px;top:497px;width:84px;height:16px;border-radius:1px;background:linear-gradient(#fdfdfc,#f0f0ec)"></div>
<div class="lbl" style="left:67px;top:499px;font-weight:bold;font-size:10.5px">Update</div>
<div class="a" style="left:328px;top:493px;width:92px;height:24px;border-radius:2px;background:#f8f8f7"></div>
<div class="a" style="left:329px;top:494px;width:90px;height:22px;box-sizing:border-box;border:1px solid #2e2622;border-radius:1px;background:linear-gradient(#d8340c,#b22608)"></div>
<div class="a" style="left:332px;top:497px;width:84px;height:16px;border-radius:1px;background:linear-gradient(#f8e2dd,#efcac2)"></div>
<div class="lbl" style="left:357px;top:499px;font-weight:bold;font-size:10.5px">Cancel</div>
</body></html>
